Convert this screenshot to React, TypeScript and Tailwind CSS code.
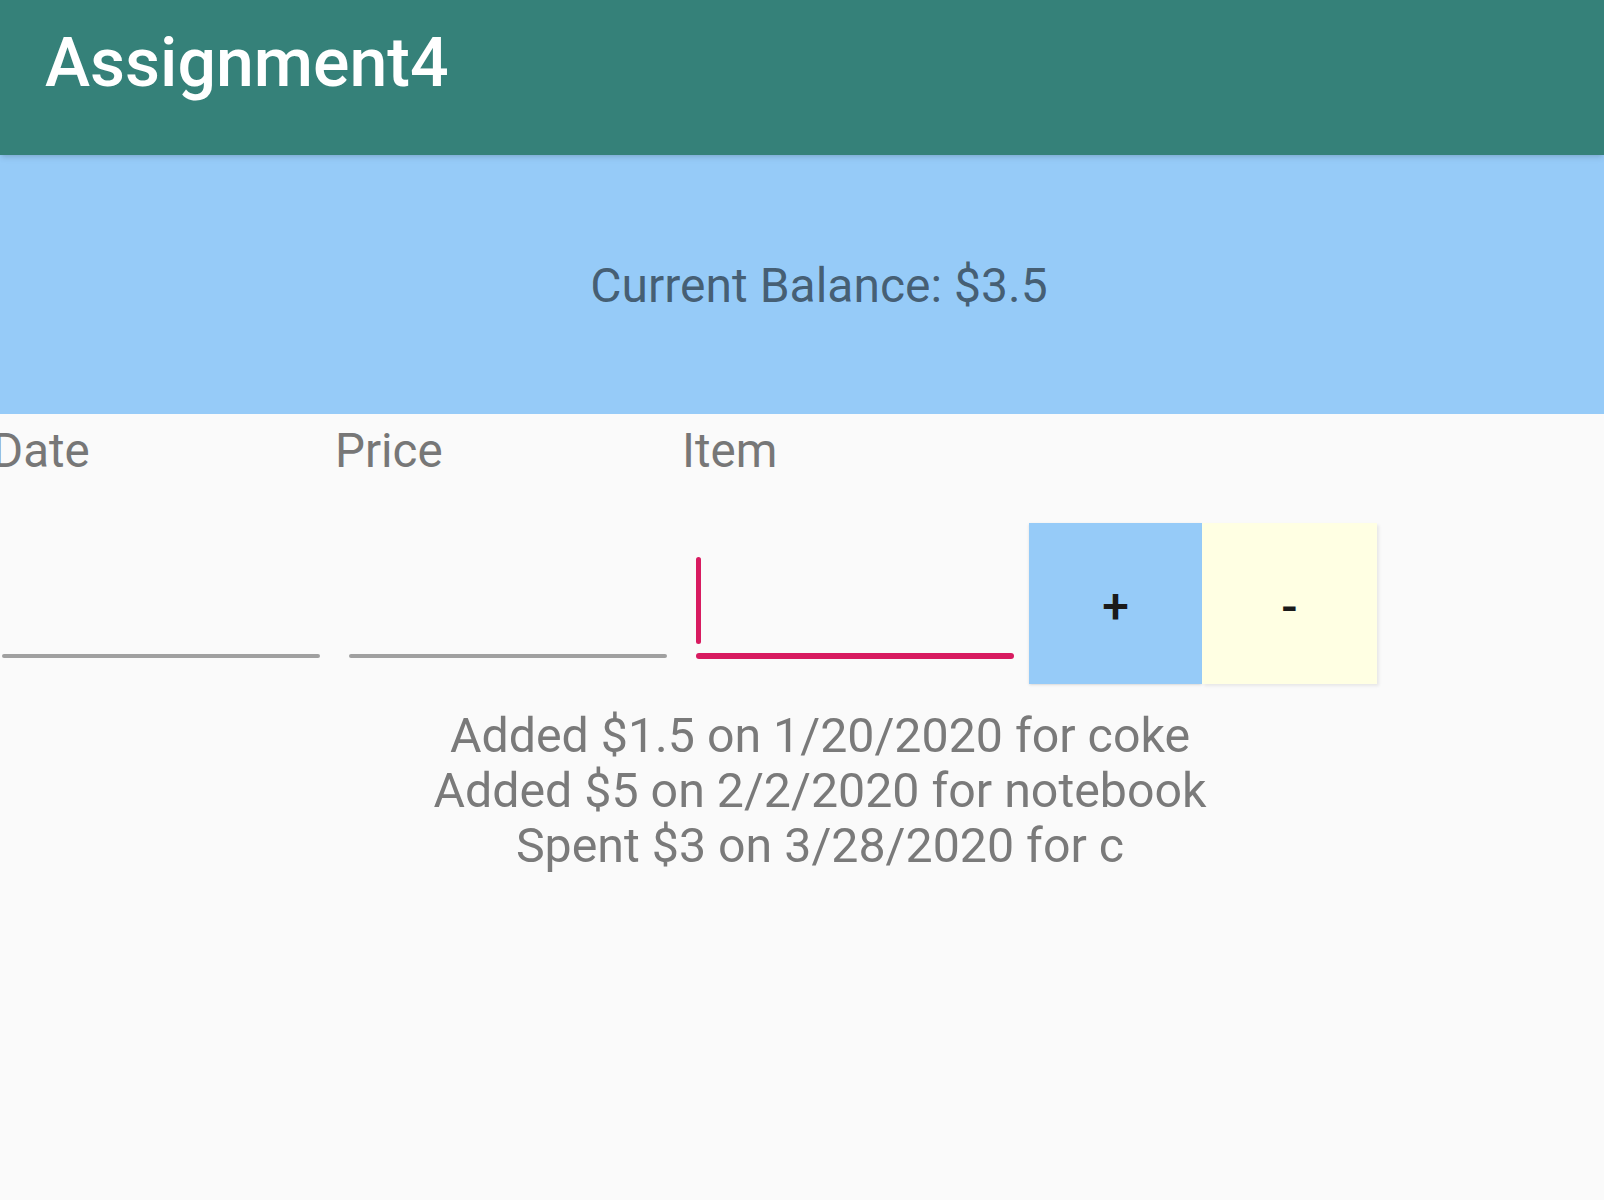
import React from 'react';

const entries = [
  'Added $1.5 on 1/20/2020 for coke',
  'Added $5 on 2/2/2020 for notebook',
  'Spent $3 on 3/28/2020 for c',
];

function Field({ active }: { active?: boolean }) {
  return (
    <div className="w-[347px] shrink-0 h-[161px] flex flex-col justify-end pb-[25px] pl-[14px]">
      {active && <div className="w-[5px] h-[87px] bg-[#d81b60] rounded-sm mb-[9px]" />}
      <div className={active ? 'w-[318px] h-[6px] bg-[#d81b60] rounded-sm' : 'w-[318px] h-[4px] bg-[#a0a0a0] rounded-sm mb-[1px]'} />
    </div>
  );
}

export default function App() {
  return (
    <div className="min-h-[1200px] w-full bg-[#fafafa] overflow-hidden font-['Roboto',sans-serif]">
      <header className="relative z-10 h-[155px] bg-[#358179] shadow-md pl-[45px] pt-[23px]">
        <h1 className="text-white text-[68px] font-medium leading-[80px]">Assignment4</h1>
      </header>

      <div className="h-[259px] bg-[#96cbf8] flex items-center justify-center pl-[34px]">
        <p className="text-[48px] text-black/55 leading-[56px] mt-[2px]">Current Balance: $3.5</p>
      </div>

      <div className="flex ml-[-12px] pt-[9px] text-[47.5px] leading-[56px] text-[#777]">
        <div className="w-[347px] shrink-0 pl-[4px]">Date</div>
        <div className="w-[347px] shrink-0">Price</div>
        <div className="w-[347px] shrink-0">Item</div>
      </div>

      <div className="flex ml-[-12px] mt-[44px]">
        <Field />
        <Field />
        <Field active />
        <button className="w-[173px] h-[161px] bg-[#96cbf8] text-[48px] font-medium text-[#1a1a1a] flex items-center justify-center pt-[6px] shadow-sm">+</button>
        <button className="w-[175px] h-[161px] bg-[#ffffe3] text-[48px] font-medium text-[#1a1a1a] flex items-center justify-center pt-[6px] shadow-[2px_2px_3px_rgba(0,0,0,0.08)]">-</button>
      </div>

      <div className="flex flex-col items-center pl-[36px] mt-[24px] text-[48.3px] leading-[55px] text-[#7a7a7a]">
        {entries.map((e) => (
          <div key={e}>{e}</div>
        ))}
      </div>
    </div>
  );
}
